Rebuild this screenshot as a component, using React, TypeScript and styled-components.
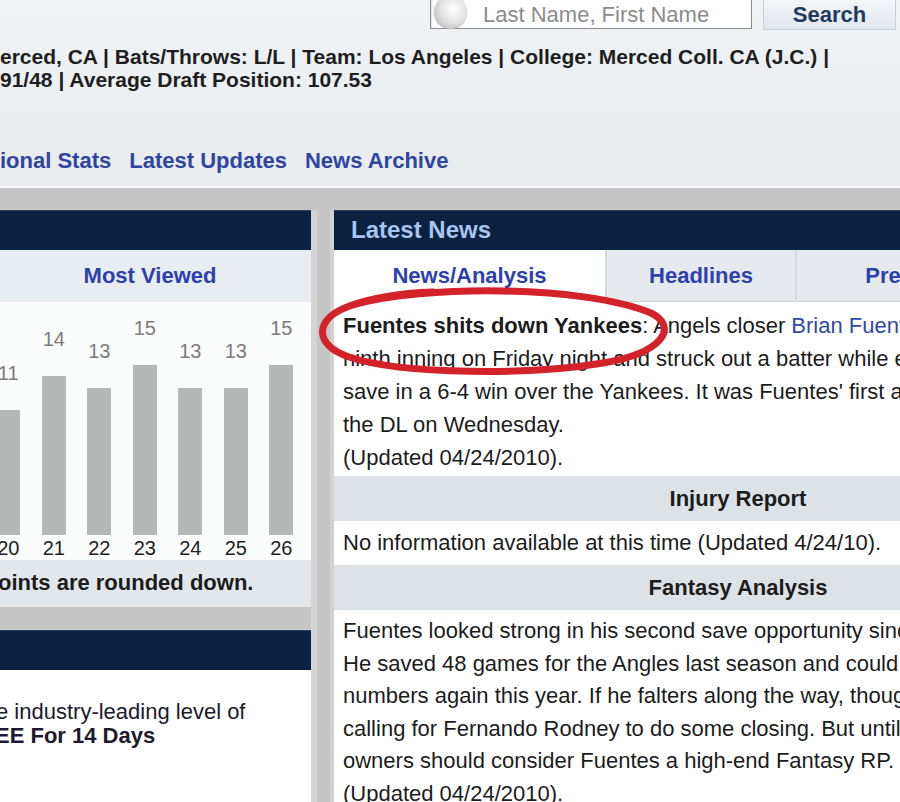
import styled, { createGlobalStyle } from 'styled-components'

const GlobalStyle = createGlobalStyle`
  html, body {
    margin: 0;
    padding: 0;
    background: #c6c6c6;
  }
  body {
    font-family: "Liberation Sans", Arial, Helvetica, sans-serif;
  }
`

const mostViewed = [
  { day: 20, value: 11 },
  { day: 21, value: 14 },
  { day: 22, value: 13 },
  { day: 23, value: 15 },
  { day: 24, value: 13 },
  { day: 25, value: 13 },
  { day: 26, value: 15 },
]

const newsLines = [
  'ninth inning on Friday night and struck out a batter while earning his first',
  "save in a 6-4 win over the Yankees. It was Fuentes' first appearance since coming off",
  'the DL on Wednesday.',
  '(Updated 04/24/2010).',
]

const fantasyLines = [
  'Fuentes looked strong in his second save opportunity since coming off the DL.',
  'He saved 48 games for the Angles last season and could post similar',
  'numbers again this year. If he falters along the way, though, fans will be',
  'calling for Fernando Rodney to do some closing. But until that happens, Fantasy',
  'owners should consider Fuentes a high-end Fantasy RP.',
  '(Updated 04/24/2010).',
]

const App = () => {
  return (
    <Page>
      <GlobalStyle />
      <Top>
        <SearchRow>
          <SearchBox>
            <Ball />
            <Placeholder>Last Name, First Name</Placeholder>
          </SearchBox>
          <SearchButton>Search</SearchButton>
        </SearchRow>
        <Info>
          erced, CA | Bats/Throws: L/L | Team: Los Angeles | College: Merced Coll. CA (J.C.) |
          <br />
          91/48 | Average Draft Position: 107.53
        </Info>
        <Nav>
          <NavLink>ional Stats</NavLink>
          <NavLink>Latest Updates</NavLink>
          <NavLink>News Archive</NavLink>
        </Nav>
      </Top>

      <Main>
        <Column edge="right">
          <Panel>
            <PanelHeader />
            <LeftTabs>
              <TabLink>Most Viewed</TabLink>
            </LeftTabs>
            <Chart>
              {mostViewed.map((d) => (
                <BarColumn key={d.day}>
                  <BarValue>{d.value}</BarValue>
                  <Bar style={{ height: Math.round(d.value * 11.33) }} />
                  <BarDay>{d.day}</BarDay>
                </BarColumn>
              ))}
            </Chart>
            <ChartNote>oints are rounded down.</ChartNote>
          </Panel>
          <Panel>
            <PanelHeader />
            <PromoBody>
              <PromoLine indent={-4}>e industry-leading level of</PromoLine>
              <PromoLine indent={-5} bold>
                EE For 14 Days
              </PromoLine>
            </PromoBody>
          </Panel>
        </Column>

        <Column edge="left">
          <Panel>
            <PanelHeader>Latest News</PanelHeader>
            <Tabs>
              <Tab width={271} active>
                <TabLink>News/Analysis</TabLink>
              </Tab>
              <Tab width={188}>
                <TabLink>Headlines</TabLink>
              </Tab>
              <Tab width={232}>
                <TabLink>Previews</TabLink>
              </Tab>
              <Tab width={111} />
            </Tabs>
            <News>
              <b>Fuentes shits down Yankees</b>: Angels closer <InlineLink>Brian Fuentes</InlineLink>{' '}
              pitched a perfect
              {newsLines.map((l) => (
                <span key={l}>
                  <br />
                  {l}
                </span>
              ))}
              {/* red marker circle drawn over the headline */}
              <Scribble viewBox="0 0 360 100" width={360} height={100}>
                <path
                  d="M40 22 C 110 2, 270 2, 338 30 C 366 44, 350 70, 290 80 C 220 92, 90 92, 36 74 C 0 62, 2 36, 34 24 C 60 14, 90 10, 120 9"
                  fill="none"
                  stroke="#d3222a"
                  strokeWidth={7}
                  strokeLinecap="round"
                />
              </Scribble>
            </News>
            <SectionTitle>Injury Report</SectionTitle>
            <SectionText>No information available at this time (Updated 4/24/10).</SectionText>
            <SectionTitle>Fantasy Analysis</SectionTitle>
            <Analysis>
              {fantasyLines.map((l, i) => (
                <span key={l}>
                  {i > 0 && <br />}
                  {l}
                </span>
              ))}
            </Analysis>
          </Panel>
        </Column>
      </Main>
    </Page>
  )
}
export default App

const Page = styled.div`
  width: 900px;
  height: 802px;
  overflow: hidden;
  background: #c6c6c6;
  color: #1c1c1c;
  font-size: 22px;
`

const Top = styled.div`
  height: 186px;
  background: linear-gradient(#f0f3f6, #e8ecef);
  border-bottom: 2px solid #f7f8f9;
  overflow: hidden;
`

const SearchRow = styled.div`
  display: flex;
  justify-content: flex-end;
  gap: 11px;
  padding-right: 4px;
  margin-top: -6px;
`

const SearchBox = styled.div`
  display: flex;
  align-items: center;
  width: 322px;
  height: 35px;
  box-sizing: border-box;
  padding: 6px 0 0 3px;
  background: #fff;
  border: 1px solid #8c8c8c;
  box-shadow: inset 1px 1px 2px rgba(0, 0, 0, 0.15);
`

const Ball = styled.div`
  width: 33px;
  height: 33px;
  margin-top: -4px;
  border-radius: 50%;
  background: radial-gradient(circle at 60% 40%, #ffffff 0%, #e4e4e4 45%, #a9a9a9 100%);
  box-shadow: 0 0 1px #777;
`

const Placeholder = styled.span`
  margin-left: 16px;
  color: #8b8b8b;
  font-size: 22px;
`

const SearchButton = styled.div`
  width: 133px;
  height: 36px;
  box-sizing: border-box;
  padding-top: 5px;
  text-align: center;
  line-height: 30px;
  font-weight: bold;
  color: #1e3b5f;
  background: linear-gradient(#f7f9fb, #e2e7ec);
  border: 1px solid #c8ced5;
`

const Info = styled.div`
  margin-top: 15px;
  font-size: 21px;
  font-weight: bold;
  line-height: 23px;
  white-space: nowrap;
  color: #1e1e1e;
`

const Nav = styled.div`
  display: flex;
  gap: 18px;
  margin-top: 57px;
  line-height: 26px;
  white-space: nowrap;
`

const NavLink = styled.span`
  font-weight: bold;
  color: #2e45a3;
`

const Main = styled.div`
  display: grid;
  grid-template-columns: 311px 808px;
  column-gap: 23px;
  padding-top: 22px;
`

const Column = styled.div<{ edge: 'left' | 'right' }>`
  display: flex;
  flex-direction: column;
  gap: 23px;
  box-shadow: ${({ edge }) => (edge === 'right' ? '6px 0 0 #d4d4d4' : '-4px 0 0 #d2d2d2')};
`

const Panel = styled.div`
  display: flex;
  flex-direction: column;
  background: #fff;
`

const PanelHeader = styled.div`
  height: 40px;
  padding-left: 17px;
  background: #0a2240;
  border-top: 1px solid #2c4260;
  box-sizing: border-box;
  color: #a8c5ee;
  font-size: 24px;
  font-weight: bold;
  line-height: 38px;
`

const LeftTabs = styled.div`
  display: flex;
  align-items: center;
  justify-content: center;
  height: 52px;
  padding-right: 11px;
  background: #e8edf1;
`

const TabLink = styled.span`
  font-weight: bold;
  color: #2c41ad;
  white-space: nowrap;
`

const Chart = styled.div`
  display: flex;
  justify-content: flex-end;
  align-items: flex-end;
  height: 258px;
  box-sizing: border-box;
  padding: 0 7px 1px 0;
  background: #fbfcfc;
`

const BarColumn = styled.div`
  display: flex;
  flex-direction: column;
  align-items: center;
  width: 45.5px;
  flex: none;
`

const BarValue = styled.div`
  margin-bottom: 26px;
  font-size: 20px;
  line-height: 22px;
  color: #7b7b7b;
`

const Bar = styled.div`
  width: 24px;
  background: #b5b8b6;
`

const BarDay = styled.div`
  margin-top: 2px;
  font-size: 20px;
  line-height: 22px;
  color: #1e1e1e;
`

const ChartNote = styled.div`
  height: 47px;
  background: #e2e7eb;
  font-weight: bold;
  line-height: 45px;
  white-space: nowrap;
  margin-left: -2px;
`

const PromoBody = styled.div`
  height: 200px;
  padding-top: 30px;
  background: #fff;
`

const PromoLine = styled.div<{ indent: number; bold?: boolean }>`
  margin-left: ${({ indent }) => indent}px;
  font-weight: ${({ bold }) => (bold ? 'bold' : 'normal')};
  line-height: 24px;
  white-space: nowrap;
  color: #1c1a2c;
`

const Tabs = styled.div`
  display: flex;
  gap: 2px;
  height: 52px;
  background: #d4d9de;
`

const Tab = styled.div<{ width: number; active?: boolean }>`
  display: flex;
  align-items: center;
  justify-content: center;
  width: ${({ width }) => width}px;
  flex: none;
  background: ${({ active }) => (active ? '#fff' : '#e6eaee')};
  border-bottom: ${({ active }) => (active ? 'none' : '1px solid #cdd3d8')};
  box-sizing: border-box;
`

const News = styled.div`
  position: relative;
  padding: 7px 9px 2px;
  line-height: 33px;
  white-space: nowrap;
  background: #fff;
`

const InlineLink = styled.span`
  color: #3049a6;
`

const Scribble = styled.svg`
  position: absolute;
  left: -21px;
  top: -19px;
  overflow: visible;
  pointer-events: none;
`

const SectionTitle = styled.div`
  height: 45px;
  line-height: 45px;
  text-align: center;
  font-weight: bold;
  background: #dde2e6;
`

const SectionText = styled.div`
  height: 44px;
  padding-left: 9px;
  line-height: 44px;
  white-space: nowrap;
  background: #fff;
`

const Analysis = styled.div`
  padding: 5px 9px 0;
  line-height: 32.5px;
  white-space: nowrap;
  background: #fff;
`
